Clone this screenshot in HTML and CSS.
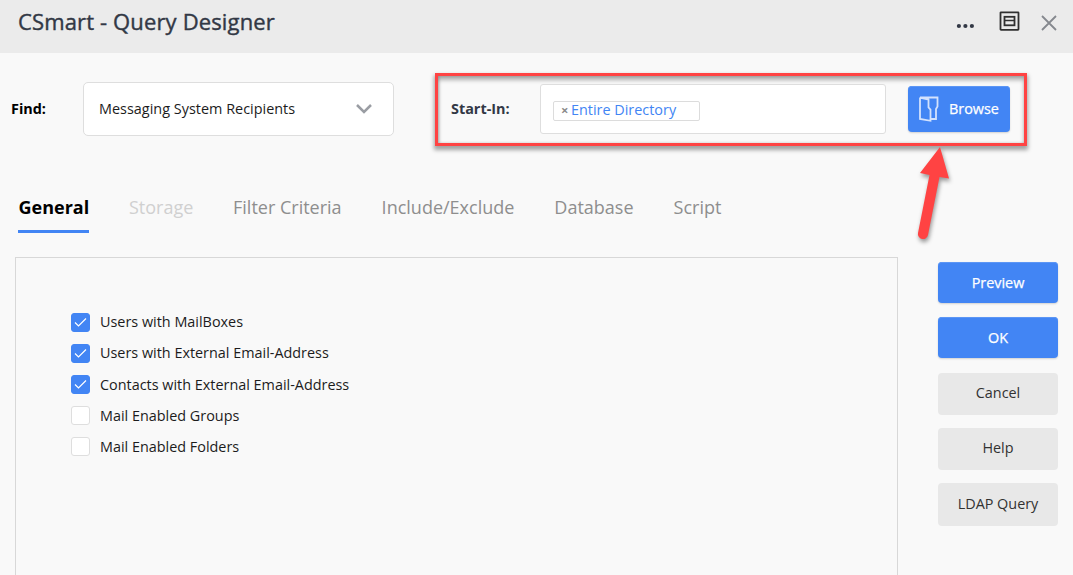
FILE: index.html
```
<!DOCTYPE html>
<html lang="en">
<head>
<meta charset="utf-8">
<title>CSmart - Query Designer</title>
<link rel="stylesheet" href="styles.css">
</head>
<body>
<header class="titlebar">
  <h1 class="title">CSmart - Query Designer</h1>
  <div class="window-tools">
    <svg class="dots" width="18" height="6" viewBox="0 0 18 6" fill="#323845"><circle cx="2.9" cy="3" r="2.1"/><circle cx="9.400" cy="3" r="2.1"/><circle cx="15.9" cy="3" r="2.1"/></svg>
    <svg class="restore" width="22" height="22" viewBox="0 0 22 22" fill="none" stroke="#303030"><rect x="1.500" y="2.300" width="18" height="17.500" rx=".5" stroke-width="1.8"/><rect x="5.500" y="6.800" width="10" height="8.500" stroke-width="1.8"/><path d="M5.500 10.500h10" stroke-width="1.500"/></svg>
    <svg class="close" width="16" height="16" viewBox="0 0 16 16" fill="none" stroke="#85888e" stroke-width="1.8"><path d="M1 1l14 14M15 1L1 15"/></svg>
  </div>
</header>
<section class="search">
  <label class="find-label"><span>Find:</span></label>
  <div class="select"><span class="select-text">Messaging System Recipients</span>
    <svg width="16" height="10" viewBox="0 0 16 10" fill="none" stroke="#9a9da3" stroke-width="2.500"><path d="M1 1l7 7 7-7"/></svg>
  </div>
  <div class="callout">
    <span class="start-label">Start-In:</span>
    <div class="start-input"><div class="tag"><span class="tag-x">×</span><span class="tag-text">Entire Directory</span></div></div>
    <button class="button primary browse">
      <svg width="20" height="26" viewBox="0 0 20 26" fill="none" stroke="#d3e2fd" stroke-width="1.800"><path d="M1 1.500h17.500v9l-1.500 2.500v10h-5M1 1.500v21.500l10.500 1.800v-11.300l-2-2V3.500L1 1.500"/></svg>
      <span class="browse-text">Browse</span>
    </button>
    <svg class="arrow" width="60" height="106" viewBox="0 0 60 106"><path d="M30 3L10 29l9.500 2-11.500 58a5 5 0 0 0 10 2L29.500 33l9.500 1.500z" fill="#ff4343"/></svg>
  </div>
</section>
<nav class="tabs">
  <span class="tab active">General</span>
  <span class="tab disabled">Storage</span>
  <span class="tab filter">Filter Criteria</span>
  <span class="tab include">Include/Exclude</span>
  <span class="tab database">Database</span>
  <span class="tab">Script</span>
</nav>
<main class="content">
  <section class="panel">
    <div class="option raised"><i class="box checked"><svg width="13" height="10" viewBox="0 0 13 10"><path d="M1 5.500l3.500 3.500L12 1.500"/></svg></i><span>Users with MailBoxes</span></div>
    <div class="option raised"><i class="box checked"><svg width="13" height="10" viewBox="0 0 13 10"><path d="M1 5.500l3.500 3.500L12 1.500"/></svg></i><span>Users with External Email-Address</span></div>
    <div class="option"><i class="box checked"><svg width="13" height="10" viewBox="0 0 13 10"><path d="M1 5.500l3.500 3.500L12 1.500"/></svg></i><span>Contacts with External Email-Address</span></div>
    <div class="option"><i class="box"></i><span>Mail Enabled Groups</span></div>
    <div class="option"><i class="box"></i><span>Mail Enabled Folders</span></div>
  </section>
  <aside class="actions">
    <button class="button primary">Preview</button>
    <button class="button primary">OK</button>
    <button class="button secondary first">Cancel</button>
    <button class="button secondary">Help</button>
    <button class="button secondary last">LDAP Query</button>
  </aside>
</main>
</body>
</html>
```
FILE: styles.css
```
* { box-sizing: border-box; }
body {
  margin: 0;
  height: 575px;
  overflow: hidden;
  background: #f9f9f9;
  color: #1c1c1c;
  font: 14.4px/20px "Open Sans", "Noto Sans", sans-serif;
  white-space: nowrap;
}
svg { display: block; flex: none; }
.titlebar {
  height: 53px;
  padding: 0 16px 0 18px;
  display: flex;
  justify-content: space-between;
  background: #ebebeb;
}
.title {
  margin: 5px 0 0;
  color: #323845;
  font-size: 22px;
  font-weight: 500;
  letter-spacing: .14px;
  line-height: 32px;
  -webkit-text-stroke: .4px #323845;
}
.window-tools { display: flex; align-items: flex-start; }
.dots { margin: 23px 25px 0 0; }
.restore { margin: 10px 20px 0 0; }
.close { margin-top: 15px; }
.search {
  height: 120px;
  padding-top: 20px;
  display: flex;
  align-items: flex-start;
}
.find-label {
  width: 83px;
  padding: 26px 0 0 11px;
  color: #000;
  font-weight: 700;
}
.select {
  width: 311px;
  height: 54px;
  margin: 9px 41px 0 0;
  padding: 0 21px 0 15px;
  display: flex;
  align-items: center;
  justify-content: space-between;
  background: #fff;
  border: 1px solid #dedede;
  border-radius: 5px;
}
.select-text { letter-spacing: .02px; }
.callout {
  position: relative;
  width: 592px;
  height: 73px;
  padding: 0 14px 2px 13px;
  display: flex;
  align-items: center;
  border: 3px solid #ff4343;
  box-shadow: 0 3px 4px 1px rgba(0,0,0,.35), inset 0 4px 4px rgba(0,0,0,.3), inset 1px 0 3px rgba(0,0,0,.2);
}
.start-label { width: 89px; color: #323845; font-weight: 700; }
.start-input {
  width: 346px;
  height: 50px;
  margin-right: 22px;
  padding: 16px 0 0 12px;
  background: #fff;
  border: 1px solid #dedede;
  border-radius: 3px;
}
.tag {
  width: 147px;
  height: 20px;
  padding: 0 0 2px 7px;
  display: flex;
  align-items: center;
  border: 1px solid #dcdcdc;
  border-radius: 2px;
  color: #4285f4;
}
.tag-x { width: 10px; padding-top: 2px; color: #8b8b8b; font-size: 13px; font-weight: 700; line-height: 17px; }
.tag-text { line-height: 17px; }
.button {
  width: 120px;
  height: 41px;
  padding: 0;
  flex: none;
  border: 0;
  border-radius: 4px;
  font: 14.4px/20px "Open Sans", "Noto Sans", sans-serif;
}
.primary {
  background: #4285f4;
  color: #fff;
  font-weight: 500;
  -webkit-text-stroke: .25px #fff;
  box-shadow: inset 0 1px #5c96f5, 0 1px 2px rgba(0,0,0,.16);
}
.secondary { height: 42px; padding-bottom: 2px; background: #e8e8e8; color: #323232; }
.last { height: 43px; }
.browse {
  width: 102px;
  height: 46px;
  padding-left: 11px;
  display: flex;
  align-items: center;
}
.browse-text { margin-left: 10px; }
.arrow {
  position: absolute;
  left: 472px;
  top: 68px;
  z-index: 1;
  filter: drop-shadow(1px 3px 2px rgba(0,0,0,.4));
}
.tabs {
  height: 84px;
  padding: 20px 0 0 18px;
  display: flex;
  align-items: flex-start;
  color: #8e8e8e;
  font-size: 18px;
  line-height: 28px;
}
.tab { height: 40px; margin-right: 40px; }
.active { width: 71px; padding-left: .5px; color: #000; font-weight: 700; border-bottom: 3px solid #4285f4; }
.disabled { width: 64px; color: #d0d0d0; }
.content { height: 318px; padding-left: 15px; display: flex; }
.panel {
  width: 883px;
  height: 340px;
  margin-right: 40px;
  padding: 54.500px 0 0 55px;
  border: 1px solid #d8d8d8;
}
.option { height: 31.100px; display: flex; align-items: flex-start; }
.option span { margin-left: 10px; }
.raised span { margin-top: -1px; }
.box {
  width: 19px;
  height: 19px;
  display: grid;
  place-items: center;
  background: #fff;
  border: 1px solid #dedede;
  border-radius: 3px;
}
.checked { background: #4285f4; border-color: #4285f4; }
.checked path { fill: none; stroke: #fff; stroke-width: 1.200px; }
.actions {
  padding-top: 5px;
  display: flex;
  flex-direction: column;
  gap: 14px;
}
.secondary { margin-bottom: -1px; }
.first { margin-top: 1px; }
```
